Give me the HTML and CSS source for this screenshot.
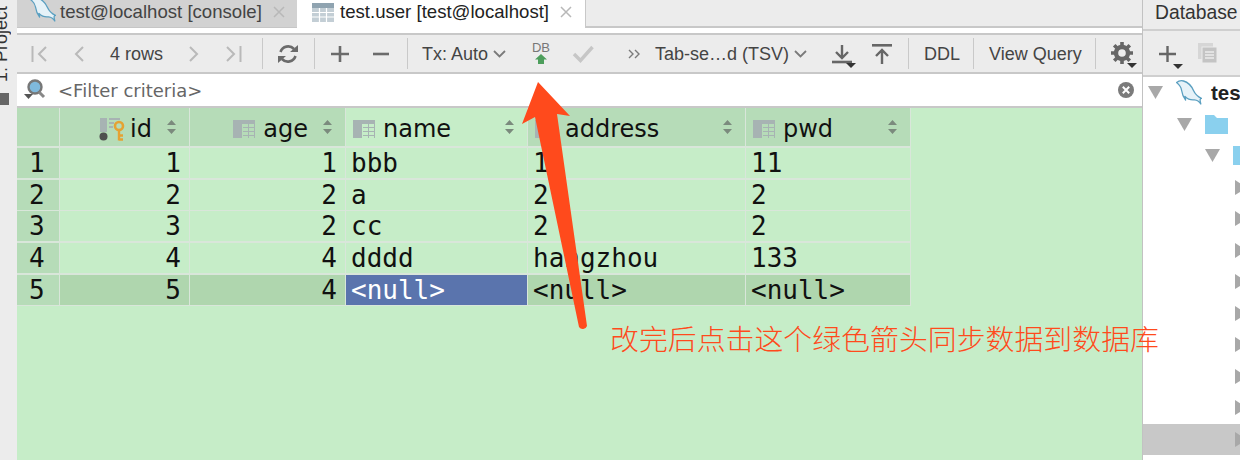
FILE: index.html
```html
<!DOCTYPE html>
<html lang="zh">
<head>
<meta charset="utf-8">
<title>test.user</title>
<link rel="stylesheet" href="styles.css">
</head>
<body>
<svg class="defs" width="0" height="0" aria-hidden="true">
  <defs>
    <symbol id="dolphin" viewBox="0 0 26 25">
      <path d="M0.6 2.5 C2.5 1 5 0.3 7.5 1 C12 2.3 15.5 6 17.5 10.5 C18.6 13 20.5 16 25.4 18.4 C24 18.8 23.6 19.4 24.8 24 C23 21.2 21 20 18.5 19.8 C15 20.2 11.5 19 9 16.5 L9.6 20 C7.6 17.5 6 13.5 5.5 10 C5.2 7.5 3.5 5 0.6 2.5 Z" fill="#e6f2f8" stroke="#5a9fc0" stroke-width="1.3" stroke-linejoin="round"/>
    </symbol>
    <symbol id="col" viewBox="0 0 22 18">
      <rect x="0" y="0" width="9" height="18" fill="#a7b3b3"/>
      <rect x="9" y="0" width="13" height="4" fill="#a7b3b3"/>
      <path d="M10 7.5H22M10 11.5H22M10 15.5H22M15.5 4V18M21.5 4V18" stroke="#a7b3b3" stroke-width="1" fill="none"/>
    </symbol>
    <symbol id="sort" viewBox="0 0 9 14">
      <path d="M4.5 0L9 5H0ZM0 9H9L4.5 14Z" fill="#7b8a7d"/>
    </symbol>
    <symbol id="tri-down" viewBox="0 0 15 13">
      <path d="M0 0H15L7.5 13Z" fill="#a8a8a8"/>
    </symbol>
    <symbol id="tri-right" viewBox="0 0 12 15">
      <path d="M0 0L12 7.5L0 15Z" fill="#a8a8a8"/>
    </symbol>
    <symbol id="folder" viewBox="0 0 23 19">
      <path d="M0 0H9L12 3H23V19H0Z" fill="#8ad0ee"/>
    </symbol>
    <symbol id="cross" viewBox="0 0 12 12">
      <path d="M1 1L11 11M11 1L1 11" stroke="#b8b8b8" stroke-width="1.5" fill="none"/>
    </symbol>
  </defs>
</svg>

<div class="app">
  <aside class="strip">
    <span class="strip-label">1: Project</span>
    <span class="strip-icon"></span>
  </aside>

  <main class="main">
    <div class="tabs">
      <div class="tab tab-off">
        <svg class="tab-dolphin"><use href="#dolphin"/></svg>
        <span>test@localhost [console]</span>
        <svg class="tab-x"><use href="#cross"/></svg>
      </div>
      <div class="tab tab-on">
        <svg class="tab-table" viewBox="0 0 22 19">
          <rect width="22" height="5" fill="#8fa3b0"/>
          <rect y="5" width="22" height="14" fill="#c3ced5"/>
          <path d="M0 9.5H22M0 14H22M7.5 5V19M14.5 5V19" stroke="#fff" stroke-width="1.2"/>
        </svg>
        <span>test.user [test@localhost]</span>
        <svg class="tab-x"><use href="#cross"/></svg>
      </div>
      <div class="tab-rest"></div>
    </div>
    <div class="tab-gap"></div>

    <div class="toolbar">
      <svg class="ic" width="16" height="16" viewBox="0 0 16 16"><path d="M1.5 0V16M15 1L8 8L15 15" fill="none" stroke="#b9b9b9" stroke-width="2"/></svg>
      <svg class="ic" width="12" height="16" viewBox="0 0 12 16"><path d="M10 1L3 8L10 15" fill="none" stroke="#b9b9b9" stroke-width="2"/></svg>
      <span class="tb-text">4 rows</span>
      <svg class="ic" width="12" height="16" viewBox="0 0 12 16"><path d="M2 1L9 8L2 15" fill="none" stroke="#b9b9b9" stroke-width="2"/></svg>
      <svg class="ic" width="16" height="16" viewBox="0 0 16 16"><path d="M14.5 0V16M1 1L8 8L1 15" fill="none" stroke="#b9b9b9" stroke-width="2"/></svg>
      <i class="sep"></i>
      <svg class="ic" width="20" height="20" viewBox="0 0 20 20"><path d="M2.5 8A8 8 0 0 1 16 5M17.5 12A8 8 0 0 1 4 15" fill="none" stroke="#6b6b6b" stroke-width="2.6"/><path d="M12 8H20V1ZM8 12H0V19Z" fill="#6b6b6b"/></svg>
      <i class="sep"></i>
      <svg class="ic" width="18" height="18" viewBox="0 0 18 18"><path d="M0 9H18M9 1V17" stroke="#6b6b6b" stroke-width="2.6"/></svg>
      <svg class="ic" width="18" height="18" viewBox="0 0 18 18"><path d="M1 9H17" stroke="#6b6b6b" stroke-width="2.6"/></svg>
      <i class="sep"></i>
      <span class="tb-text">Tx: Auto</span>
      <svg class="ic" width="13" height="8" viewBox="0 0 13 8"><path d="M1 1L6.5 6.5L12 1" fill="none" stroke="#7a7a7a" stroke-width="1.8"/></svg>
      <div class="db"><span class="db-label">DB</span><svg width="12" height="10" viewBox="0 0 12 10"><path d="M6 0L12 5.5H9V10H3V5.5H0Z" fill="#4d9e5c"/></svg></div>
      <svg class="ic" width="22" height="18" viewBox="0 0 22 18"><path d="M2 9L8.5 15.5L20.5 2" fill="none" stroke="#c6c6c6" stroke-width="3.4"/></svg>
      <svg class="ic" width="12" height="10" viewBox="0 0 12 10"><path d="M1 1L5 5L1 9M7 1L11 5L7 9" fill="none" stroke="#7a7a7a" stroke-width="1.4"/></svg>
      <span class="tb-text">Tab-se…d (TSV)</span>
      <svg class="ic" width="13" height="8" viewBox="0 0 13 8"><path d="M1 1L6.5 6.5L12 1" fill="none" stroke="#7a7a7a" stroke-width="1.8"/></svg>
      <svg class="ic ic-down" width="24" height="24" viewBox="0 0 24 24"><path d="M10 1V13M4 8L10 14L16 8" fill="none" stroke="#666" stroke-width="2.4"/><path d="M0 18H20" stroke="#666" stroke-width="2.6"/><path d="M14 19H24L19 24Z" fill="#333"/></svg>
      <svg class="ic" width="20" height="20" viewBox="0 0 20 20"><path d="M0 1.3H20" stroke="#666" stroke-width="2.6"/><path d="M10 20V7M4 12L10 6L16 12" fill="none" stroke="#666" stroke-width="2.4"/></svg>
      <i class="sep"></i>
      <span class="tb-text">DDL</span>
      <i class="sep"></i>
      <span class="tb-text">View Query</span>
      <i class="sep"></i>
      <svg class="ic ic-gear" width="26" height="26" viewBox="0 0 26 26"><circle cx="11" cy="11" r="6" fill="none" stroke="#666" stroke-width="4.4"/><path d="M11 0V22M0 11H22M3.2 3.2L18.8 18.8M18.8 3.2L3.2 18.8" stroke="#666" stroke-width="3.6" stroke-dasharray="4 14"/><path d="M16 21H26L21 26Z" fill="#333"/></svg>
    </div>

    <div class="filter">
      <svg class="filter-ic" width="22" height="22" viewBox="0 0 22 22">
        <circle cx="11" cy="8" r="6.5" fill="#7fb9dc" stroke="#777" stroke-width="2.4"/>
        <path d="M15 13L20 18" stroke="#888" stroke-width="3"/>
        <path d="M0 15H9L4.5 20Z" fill="#555"/>
      </svg>
      <span class="filter-text">&lt;Filter criteria&gt;</span>
      <svg class="filter-x" width="16" height="16" viewBox="0 0 16 16"><circle cx="8" cy="8" r="8" fill="#7b7b7b"/><path d="M4.8 4.8L11.2 11.2M11.2 4.8L4.8 11.2" stroke="#fff" stroke-width="2"/></svg>
    </div>

    <div class="grid-area">
      <div class="table">
        <div class="hc"></div>
        <div class="hc hc-end">
          <svg class="key-ic" viewBox="0 0 26 24">
            <rect x="1" y="1" width="7" height="14" fill="#a7b3b3"/>
            <path d="M10 2H21M10 6H15M10 10H14" stroke="#a7b3b3" stroke-width="2"/>
            <circle cx="4.5" cy="19.5" r="4" fill="#4f4f4f"/>
            <circle cx="20" cy="9" r="4" fill="none" stroke="#e5a233" stroke-width="2.6"/>
            <path d="M20 13V23.5M20 18.5H24M20 22.5H24" stroke="#e5a233" stroke-width="2.4"/>
          </svg>
          <span class="hname">id</span>
          <svg class="sort"><use href="#sort"/></svg>
        </div>
        <div class="hc hc-end">
          <svg class="col-ic"><use href="#col"/></svg>
          <span class="hname">age</span>
          <svg class="sort"><use href="#sort"/></svg>
        </div>
        <div class="hc hc-cur">
          <svg class="col-ic"><use href="#col"/></svg>
          <span class="hname hname-grow">name</span>
          <svg class="sort"><use href="#sort"/></svg>
        </div>
        <div class="hc">
          <svg class="col-ic"><use href="#col"/></svg>
          <span class="hname hname-grow">address</span>
          <svg class="sort"><use href="#sort"/></svg>
        </div>
        <div class="hc">
          <svg class="col-ic"><use href="#col"/></svg>
          <span class="hname hname-grow">pwd</span>
          <svg class="sort"><use href="#sort"/></svg>
        </div>

        <div class="rn">1</div><div class="c num">1</div><div class="c num">1</div><div class="c">bbb</div><div class="c">1</div><div class="c">11</div>
        <div class="rn">2</div><div class="c num">2</div><div class="c num">2</div><div class="c">a</div><div class="c">2</div><div class="c">2</div>
        <div class="rn">3</div><div class="c num">3</div><div class="c num">2</div><div class="c">cc</div><div class="c">2</div><div class="c">2</div>
        <div class="rn">4</div><div class="c num">4</div><div class="c num">4</div><div class="c">dddd</div><div class="c">hangzhou</div><div class="c">133</div>
        <div class="rn">5</div><div class="c num cur">5</div><div class="c num cur">4</div><div class="c sel">&lt;null&gt;</div><div class="c cur">&lt;null&gt;</div><div class="c cur">&lt;null&gt;</div>
      </div>
    </div>
  </main>

  <aside class="side">
    <div class="side-title">Database</div>
    <div class="side-tools">
      <svg class="ic-plus" width="26" height="26" viewBox="0 0 26 26"><path d="M0 10H17M8.5 2V18" stroke="#666" stroke-width="2.4"/><path d="M14 20H24L19 25Z" fill="#333"/></svg>
      <svg width="20" height="21" viewBox="0 0 20 21"><rect x="0" y="0" width="15" height="16" fill="#d6d6d6"/><rect x="4" y="4" width="15" height="16" fill="#c4c4c4" stroke="#ececec"/><path d="M7 9H16M7 12H16M7 15H16" stroke="#ececec" stroke-width="1.4"/></svg>
    </div>
    <div class="tree">
      <div class="tr l0"><svg class="td"><use href="#tri-down"/></svg><svg class="td-dolphin"><use href="#dolphin"/></svg><b class="tr-name">tes</b></div>
      <div class="tr l1"><svg class="td"><use href="#tri-down"/></svg><svg class="td-folder"><use href="#folder"/></svg></div>
      <div class="tr l2"><svg class="td"><use href="#tri-down"/></svg><svg class="td-folder"><use href="#folder"/></svg></div>
      <div class="tr l3"><svg class="tt"><use href="#tri-right"/></svg></div>
      <div class="tr l3"><svg class="tt"><use href="#tri-right"/></svg></div>
      <div class="tr l3"><svg class="tt"><use href="#tri-right"/></svg></div>
      <div class="tr l3"><svg class="tt"><use href="#tri-right"/></svg></div>
      <div class="tr l3"><svg class="tt"><use href="#tri-right"/></svg></div>
      <div class="tr l3"><svg class="tt"><use href="#tri-right"/></svg></div>
      <div class="tr l3"><svg class="tt"><use href="#tri-right"/></svg></div>
      <div class="tr l3"><svg class="tt"><use href="#tri-right"/></svg></div>
      <div class="tr l3 tr-sel"><svg class="tt"><use href="#tri-right"/></svg></div>
    </div>
  </aside>

  <svg class="arrow" width="70" height="255" viewBox="0 0 70 255">
    <path d="M19 2L3 44L16 37L60 247A4.5 4.5 0 0 0 68 246L38 34L51 36Z" fill="#ff4a1c"/>
  </svg>
  <div class="note">改完后点击这个绿色箭头同步数据到数据库</div>
</div>
</body>
</html>
```

FILE: styles.css
```css
* { box-sizing: border-box; }
html, body { margin: 0; height: 100%; }
body { overflow: hidden; background: #ececec; font-family: "Liberation Sans", Arial, sans-serif; color: #333; }
.defs { position: absolute; }
.app { position: relative; display: flex; width: 1240px; height: 460px; overflow: hidden; }

.strip { width: 17px; flex: none; height: 108px; display: flex; flex-direction: column; justify-content: flex-end; align-items: flex-start; background: #ececec; overflow: hidden; }
.strip-label { writing-mode: vertical-rl; transform: rotate(180deg); font-size: 18px; line-height: 17px; width: 10px; white-space: nowrap; color: #333; margin-bottom: 11px; flex: none; display: flex; align-items: flex-end; }
.strip-icon { width: 9px; height: 12px; background: #666; margin-bottom: 3px; flex: none; }

.main { width: 1126px; flex: none; display: flex; flex-direction: column; border-right: 1px solid #c2c2c2; }
.tabs { display: flex; height: 28px; flex: none; font-size: 18.6px; }
.tab { display: flex; align-items: center; overflow: hidden; white-space: nowrap; padding-bottom: 4px; }
.tab-off { width: 280px; background: #d2d2d2; padding-left: 13px; color: #444; border-bottom: 1px solid #c6c6c6; }
.tab-on { width: 289px; background: #fff; padding-left: 15px; color: #222; border-right: 1px solid #c8c8c8; }
.tab-rest { flex: 1; background: #ececec; border-bottom: 2px solid #c8c8c8; }
.tab-dolphin { width: 26px; height: 25px; margin-right: 4px; margin-top: -4px; flex: none; }
.tab-table { width: 22px; height: 19px; margin-right: 6px; flex: none; }
.tab-x { width: 12px; height: 12px; margin-left: 11px; flex: none; }
.tab-gap { height: 5px; background: #fff; flex: none; }

.toolbar { height: 41px; flex: none; background: #ececec; border-top: 2px solid #c8c8c8; border-bottom: 2px solid #c8c8c8; padding-left: 14px; display: grid; grid-template-columns: 42px 37px 78px 38px 36px 16px 36px 17px 41px 35px 15px 71px 39px 40px 56px 27px 139px 38px 40px 36px 16px 49px 16px 106px 16px auto; align-items: center; font-size: 18px; }
.ic { display: block; }
.ic-down { margin-top: 4px; }
.ic-gear { margin-top: 3px; }
.sep { display: block; width: 1px; height: 31px; background: #c9c9c9; }
.tb-text { color: #444; white-space: nowrap; line-height: 20px; }
.db { display: flex; flex-direction: column; align-items: center; width: 18px; margin-top: -2px; }
.db-label { font-size: 13px; line-height: 13px; color: #777; }

.filter { height: 34px; flex: none; background: #fff; border-bottom: 2px solid #c8c8c8; display: flex; align-items: center; padding: 0 8px 0 7px; }
.filter-ic { flex: none; }
.filter-text { font-family: "DejaVu Sans", sans-serif; font-size: 18px; color: #666; margin-left: 12px; flex: 1; padding-top: 1px; }
.filter-x { flex: none; }

.grid-area { flex: 1; background: #c6edc8; min-height: 0; }
.table { display: grid; width: 894px; grid-template-columns: 42px 129px 155px 181px 217px 164px; grid-template-rows: 38px repeat(5, 30px); gap: 1.75px 1px; background: #d9e6da; padding-bottom: 1px; }
.hc { background: #b6dcb8; display: flex; align-items: center; padding: 3px 13px 0 7px; }
.hc-end { justify-content: flex-end; }
.hc-cur { background: #c6edc8; }
.col-ic { width: 22px; height: 18px; flex: none; margin-right: 8px; }
.key-ic { width: 26px; height: 24px; flex: none; margin-right: 5px; }
.hname { font-family: "DejaVu Sans", sans-serif; font-size: 24px; line-height: 30px; color: #111; margin-right: 15px; }
.hname-grow { flex: 1; margin-right: 0; }
.sort { width: 9px; height: 14px; flex: none; margin-top: -3px; }
.rn, .c { font-family: "DejaVu Sans Mono", monospace; font-size: 26px; line-height: 31px; color: #111; overflow: hidden; white-space: nowrap; }
.rn { background: #b6dcb8; padding-left: 12px; }
.c { background: #c6edc8; padding-left: 5px; }
.num { text-align: right; padding-right: 8px; }
.cur { background: #afd6ae; }
.sel { background: #5a74ad; color: #fff; }

.side { flex: 1; min-width: 0; display: flex; flex-direction: column; background: #fff; overflow: hidden; }
.side-title { height: 31px; flex: none; background: #ececec; border-bottom: 2px solid #cfcfcf; font-size: 19.3px; padding: 2px 0 0 12px; color: #333; white-space: nowrap; }
.side-tools { height: 46px; flex: none; background: #ececec; border-bottom: 2px solid #cfcfcf; display: flex; align-items: center; gap: 13px; padding-left: 16px; }
.ic-plus { margin-top: 8px; }
.tree { flex: 1; display: flex; flex-direction: column; }
.tr { height: 31.5px; flex: none; display: flex; align-items: center; overflow: hidden; white-space: nowrap; }
.l0 { padding-left: 5px; }
.l1 { padding-left: 34px; }
.l2 { padding-left: 62px; }
.l3 { padding-left: 92px; }
.td { width: 15px; height: 13px; flex: none; margin-right: 13px; }
.td-dolphin { width: 26px; height: 25px; flex: none; margin-right: 9px; }
.td-folder { width: 23px; height: 19px; flex: none; }
.tt { width: 12px; height: 15px; flex: none; }
.tr-name { font-size: 20.5px; color: #222; }
.tr-sel { background: #c8c8c8; }

.arrow { position: absolute; left: 519px; top: 80px; }
.note { position: absolute; left: 610px; top: 317px; font-family: "Noto Sans CJK SC", sans-serif; font-size: 28.9px; font-weight: 300; line-height: 40px; color: #ff4a1c; white-space: nowrap; }
```
